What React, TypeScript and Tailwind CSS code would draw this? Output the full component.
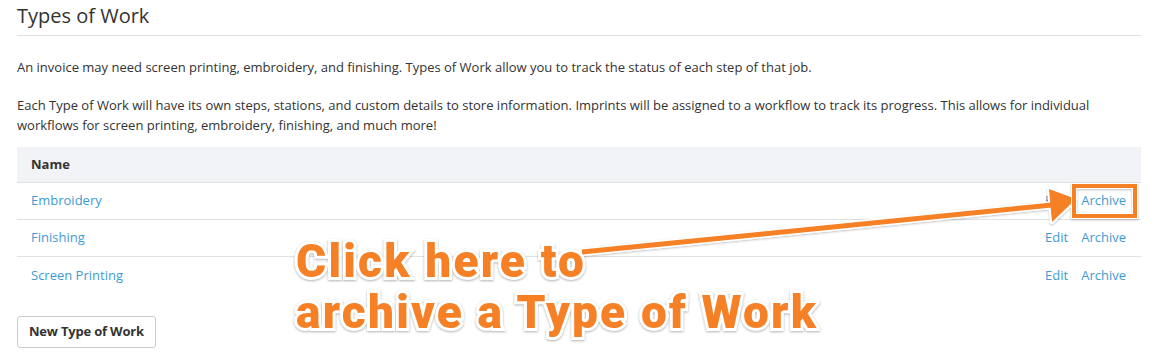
import React from 'react';

const rows = ['Embroidery', 'Finishing', 'Screen Printing'];

export default function App() {
  return (
    <div className="relative w-[1156px] h-[361px] overflow-hidden bg-white font-['Open_Sans',sans-serif] text-[#333]">
      <div className="px-[17px] pt-[2px]">
        {/* Header */}
        <h1 className="text-[20px] leading-[28px] text-[#333] border-b border-[#dfe3e6] pb-[5px] mr-[-2px]">
          Types of Work
        </h1>

        <p className="text-[13px] leading-[20px] mt-[21px]">
          An invoice may need screen printing, embroidery, and finishing. Types of Work allow you to track the status of each step of that job.
        </p>
        <p className="text-[13px] leading-[20px] mt-[18px] pr-[20px]">
          Each Type of Work will have its own steps, stations, and custom details to store information. Imprints will be assigned to a workflow to track its progress. This allows for individual workflows for screen printing, embroidery, finishing, and much more!
        </p>

        {/* Table */}
        <div className="mt-[12px] w-[1124px] text-[13px]">
          <div className="h-[36px] bg-[#f1f3f7] border-b border-[#dfe1e4] flex items-center px-[14px] font-bold">
            Name
          </div>
          {rows.map((name, i) => (
            <div
              key={name}
              className={`h-[37px] flex items-center justify-between pl-[14px] pr-[15px] ${
                i < rows.length - 1 ? 'border-b border-[#dfe1e4]' : ''
              }`}
            >
              <a className="text-[#3e9bd2]">{name}</a>
              <div className="flex gap-[13px] text-[#3e9bd2]">
                <a>Edit</a>
                <a>Archive</a>
              </div>
            </div>
          ))}
        </div>

        <button className="mt-[22px] h-[32px] px-[11px] border border-[#c9cdd1] rounded-[3px] text-[13px] font-bold text-[#333] bg-white tracking-[-0.2px]">
          New Type of Work
        </button>
      </div>

      {/* Annotation overlay */}
      <svg className="absolute inset-0 pointer-events-none" width="1156" height="361">
        <defs>
          <filter id="sh" x="-10%" y="-10%" width="120%" height="120%">
            <feDropShadow dx="0" dy="1" stdDeviation="1" floodColor="#000" floodOpacity="0.25" />
          </filter>
        </defs>
        <g filter="url(#sh)">
          <line x1="582" y1="252" x2="1052" y2="205" stroke="white" strokeWidth="8" strokeLinecap="round" />
          <polygon points="1049,189 1076,199 1052,222" fill="white" stroke="white" strokeWidth="4" strokeLinejoin="round" />
          <line x1="582" y1="252" x2="1052" y2="205" stroke="#f58025" strokeWidth="5" />
          <polygon points="1049,189 1076,199 1052,222" fill="#f58025" />
          <rect x="1074" y="186" width="61" height="30" fill="none" stroke="white" strokeWidth="6" />
          <rect x="1074" y="186" width="61" height="30" fill="none" stroke="#f58025" strokeWidth="4" />
        </g>
      </svg>

      <div className="absolute left-[296px] top-[236px] font-['Roboto',sans-serif] font-black text-[46px] leading-[51px] text-[#f58025] [-webkit-text-stroke:6px_white] [paint-order:stroke_fill] drop-shadow-[0_1px_1px_rgba(0,0,0,0.3)] tracking-[2.2px]">
        <div>Click here to</div>
        <div>archive a Type of Work</div>
      </div>
    </div>
  );
}
